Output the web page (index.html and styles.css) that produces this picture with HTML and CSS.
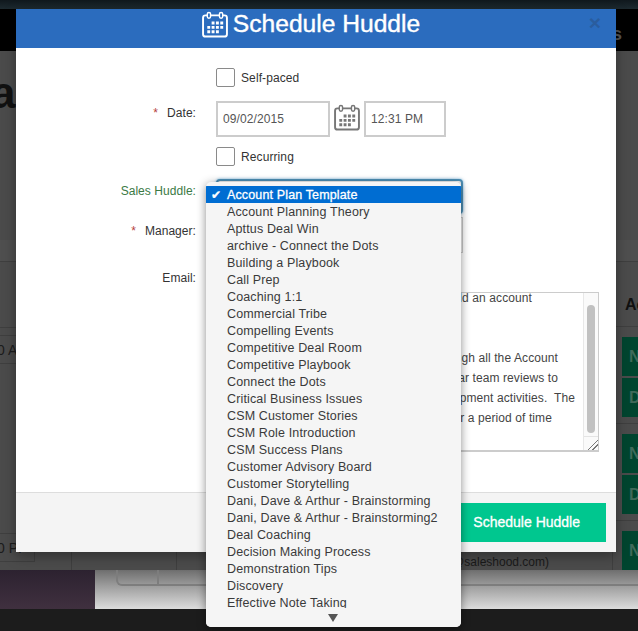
FILE: index.html
```html
<!DOCTYPE html>
<html lang="en">
<head>
  <meta charset="UTF-8">
  <meta name="viewport" content="width=device-width, initial-scale=1.0">
  <title>Schedule Huddle</title>
  <link rel="stylesheet" href="styles.css">
</head>
<body>
  <svg class="defs" width="0" height="0" aria-hidden="true">
    <symbol id="calendar" viewBox="0 0 27 27">
      <rect x="1.1" y="4" width="24.8" height="22" rx="2.5" fill="none" stroke="currentColor" stroke-width="2"/>
      <rect x="5.5" y="1" width="3.4" height="6" rx="1.7" fill="var(--ring)" stroke="currentColor" stroke-width="1.5"/>
      <rect x="18.1" y="1" width="3.4" height="6" rx="1.7" fill="var(--ring)" stroke="currentColor" stroke-width="1.5"/>
      <path fill="currentColor" d="M10 10.5h3v3h-3zM14.5 10.5h3v3h-3zM19 10.5h3v3h-3zM5.5 15h3v3h-3zM10 15h3v3h-3zM14.5 15h3v3h-3zM19 15h3v3h-3zM5.5 19.5h3v3h-3zM10 19.5h3v3h-3zM14.5 19.5h3v3h-3z"/>
    </symbol>
  </svg>

  <!-- dimmed page behind the dialog -->
  <div class="page">
    <div class="top-strip"></div>
    <div class="nav-bar"><span class="nav-end">s</span></div>
    <div class="content">
      <div class="col-left">
        <div class="page-title">a</div>
        <div class="band"></div>
        <div class="hairline"></div>
        <div class="time-row">0 AI</div>
        <div class="time-row last">0 PI</div>
      </div>
      <div class="col-mid"></div>
      <div class="col-wide"><span class="owner">(dani@saleshood.com)</span></div>
      <div class="col-right">
        <div class="band"></div>
        <div class="side-title">Ac</div>
        <div class="tile">N</div>
        <div class="tile">D</div>
        <div class="hairline"></div>
        <div class="tile">N</div>
        <div class="tile">D</div>
        <div class="hairline"></div>
        <div class="tile">N</div>
      </div>
    </div>
    <div class="foot-strip">
      <div class="foot-art"></div>
      <div class="foot-tools"><div class="tool-box"><span class="tool-cell"></span></div></div>
    </div>
    <div class="bottom-bar"></div>
  </div>

  <div class="modal">
    <div class="modal-header">
      <svg class="header-cal"><use href="#calendar"/></svg>
      <h1>Schedule Huddle</h1>
      <span class="close">×</span>
    </div>

    <div class="modal-body">
      <div class="row check-row">
        <span class="field-label"></span>
        <span class="checkbox"></span><span class="check-text">Self-paced</span>
      </div>
      <div class="row date-row">
        <span class="field-label"><i class="req">*</i>Date:</span>
        <span class="input date-input">09/02/2015</span>
        <svg class="input-cal"><use href="#calendar"/></svg>
        <span class="input time-input">12:31 PM</span>
      </div>
      <div class="row check-row recurring">
        <span class="field-label"></span>
        <span class="checkbox"></span><span class="check-text">Recurring</span>
      </div>
      <div class="row select-row">
        <span class="field-label huddle">Sales Huddle:</span>
        <span class="select focused"></span>
      </div>
      <div class="row select-row manager">
        <span class="field-label"><i class="req">*</i>Manager:</span>
        <span class="select"></span>
      </div>
      <div class="row email-row">
        <span class="field-label">Email:</span>
      </div>
      <div class="note">
        <div class="note-text">
          <p>build an account</p>
          <p>&nbsp;</p>
          <p>&nbsp;</p>
          <p>through all the Account</p>
          <p>regular team reviews to</p>
          <p>development activities.&nbsp; The</p>
          <p>for a period of time</p>
        </div>
        <div class="note-scroll">
          <div class="thumb"></div>
          <div class="grip"></div>
        </div>
      </div>

      <ul class="dropdown">
        <li class="selected">Account Plan Template</li>
        <li>Account Planning Theory</li>
        <li>Apttus Deal Win</li>
        <li>archive - Connect the Dots</li>
        <li>Building a Playbook</li>
        <li>Call Prep</li>
        <li>Coaching 1:1</li>
        <li>Commercial Tribe</li>
        <li>Compelling Events</li>
        <li>Competitive Deal Room</li>
        <li>Competitive Playbook</li>
        <li>Connect the Dots</li>
        <li>Critical Business Issues</li>
        <li>CSM Customer Stories</li>
        <li>CSM Role Introduction</li>
        <li>CSM Success Plans</li>
        <li>Customer Advisory Board</li>
        <li>Customer Storytelling</li>
        <li>Dani, Dave &amp; Arthur - Brainstorming</li>
        <li>Dani, Dave &amp; Arthur - Brainstorming2</li>
        <li>Deal Coaching</li>
        <li>Decision Making Process</li>
        <li>Demonstration Tips</li>
        <li>Discovery</li>
        <li class="cut">Effective Note Taking</li>
        <li class="more"><span class="more-arrow"></span></li>
      </ul>
    </div>

    <div class="modal-footer">
      <span class="save-button">Schedule Huddle</span>
    </div>
  </div>
</body>
</html>
```

FILE: styles.css
```css
* {
  box-sizing: border-box;
}
html, body {
  margin: 0;
  height: 631px;
  overflow: hidden;
}
body {
  position: relative;
  font-family: "Liberation Sans", Arial, sans-serif;
  font-size: 12px;
  color: #333;
  background: #1c1c1c;
}
.defs {
  position: absolute;
}

/* page behind */
.page {
  display: flex;
  flex-direction: column;
  height: 631px;
}
.top-strip {
  height: 9px;
  background: linear-gradient(#10181d, #1d2a30);
}
.nav-bar {
  height: 42px;
  background: #000;
  display: flex;
  justify-content: flex-end;
  padding: 14px 16px 0 0;
}
.nav-end {
  font-size: 19px;
  font-weight: bold;
  line-height: 22px;
  color: #555;
}
.content {
  height: 519px;
  display: flex;
  background: #4b4b4b;
  color: #1c1c1c;
}
.col-left {
  width: 72px;
  border-right: 1px solid #3f3f3f;
  overflow: hidden;
}
.page-title {
  width: 16px;
  height: 159px;
  overflow: hidden;
  font-size: 44px;
  font-weight: bold;
  line-height: 50px;
  padding-top: 17px;
  text-indent: -9px;
  color: #111;
}
.band {
  height: 22px;
  margin-top: 30px;
  border-bottom: 1px solid #3f3f3f;
  background: #4f4f4f;
}
.hairline {
  height: 1px;
  background: #3f3f3f;
}
.col-left .hairline {
  margin-top: 65px;
}
.time-row {
  height: 29px;
  margin-top: 7px;
  border-top: 1px solid #3f3f3f;
  border-bottom: 1px solid #3f3f3f;
  line-height: 29px;
  text-indent: -3px;
  font-size: 14px;
}
.time-row.last {
  width: 35px;
  margin-top: 169px;
  border-right: 1px solid #3f3f3f;
}
.col-mid {
  width: 105px;
  border-right: 1px solid #3f3f3f;
}
.col-wide {
  width: 436px;
  border-right: 1px solid #3f3f3f;
  display: flex;
  align-items: flex-end;
  justify-content: flex-end;
  padding: 0 63px 0 0;
}
.owner {
  line-height: 15px;
  font-size: 12px;
  color: #1a1a1a;
}
.col-right {
  flex: 1;
  padding-left: 9px;
  overflow: hidden;
}
.col-right .band {
  margin-left: -9px;
  margin-top: 189px;
}
.col-right .hairline {
  margin: 6px -9px 10px;
}
.side-title {
  height: 65px;
  padding-top: 33px;
  font-size: 16px;
  font-weight: bold;
  line-height: 20px;
  color: #111;
  border-bottom: 1px solid #3f3f3f;
  margin-left: -9px;
  padding-left: 12px;
  white-space: nowrap;
}
.tile {
  height: 39px;
  width: 30px;
  margin-bottom: 2px;
  background: #00452f;
  color: #3f6a5a;
  font-size: 16px;
  font-weight: bold;
  line-height: 39px;
  padding-left: 7px;
}
.side-title + .tile {
  margin-top: 10px;
}
.foot-strip {
  height: 39px;
  display: flex;
}
.foot-art {
  width: 95px;
  background: linear-gradient(#2c2230, #40303f);
}
.foot-tools {
  flex: 1;
  padding-left: 21px;
  overflow: hidden;
  background: linear-gradient(#6e6e6e, #9c9c9c 40%, #dcdcdc);
}
.tool-box {
  width: 600px;
  height: 16px;
  border: 2px solid #7d7d7d;
  border-top: 0;
  border-radius: 0 0 6px 6px;
}
.tool-cell {
  display: block;
  width: 41px;
  height: 100%;
  border-right: 2px solid #7d7d7d;
}
.bottom-bar {
  flex: 1;
  background: #1c1c1c;
}

/* dialog */
.modal {
  position: absolute;
  left: 16px;
  top: 9px;
  width: 600px;
  height: 543px;
  background: #fff;
  box-shadow: 0 4px 12px rgba(0,0,0,0.35);
  display: flex;
  flex-direction: column;
}
.modal-header {
  position: relative;
  height: 39px;
  flex: none;
  background: #2b6cbe;
  color: #fff;
  display: flex;
  justify-content: center;
  align-items: flex-start;
  padding-right: 10px;
  --ring: #2b6cbe;
}
.modal-header h1 {
  margin: 0;
  font-size: 24.6px;
  font-weight: normal;
  line-height: 29px;
  -webkit-text-stroke: 0.4px #fff;
}
.header-cal {
  width: 26px;
  height: 27px;
  margin: 2px 5px 0 0;
}
.close {
  position: absolute;
  right: 15px;
  top: 2px;
  font-size: 21px;
  font-weight: bold;
  line-height: 24px;
  color: #2a5d9e;
}
.modal-body {
  position: relative;
  flex: 1;
  padding-top: 20px;
}
.row {
  display: flex;
  align-items: flex-start;
}
.field-label {
  flex: none;
  width: 180px;
  margin-right: 20px;
  text-align: right;
  line-height: 16px;
  letter-spacing: 0.05px;
}
.req {
  font-style: normal;
  color: #b5413d;
  margin-right: 9px;
}
.check-row {
  height: 19px;
  align-items: center;
}
.recurring {
  margin-top: 10px;
}
.checkbox {
  width: 19px;
  height: 19px;
  border: 1px solid #8a8a8a;
  border-radius: 2px;
  background: #fff;
}
.check-text {
  margin-left: 6px;
  letter-spacing: 0.1px;
}
.date-row {
  margin-top: 14px;
  height: 36px;
  --ring: #fff;
}
.date-row .field-label {
  padding-top: 4px;
}
.input {
  height: 36px;
  border: 2px solid #ccc;
  padding-left: 5px;
  line-height: 33px;
  color: #555;
  letter-spacing: 0.1px;
}
.date-input {
  width: 114px;
}
.time-input {
  width: 82px;
}
.input-cal {
  width: 26px;
  height: 27px;
  margin: 3px 4px 0 4px;
  color: #777;
}
.select-row {
  margin-top: 17px;
  height: 36px;
}
.huddle {
  color: #3b7a45;
  padding-top: 0;
}
.select {
  width: 247px;
  height: 35px;
  margin-top: -4px;
  border: 1px solid #ccc;
  background: #f4f4f4;
}
.select.focused {
  border: 2px solid #4d8fb5;
  border-radius: 4px;
  box-shadow: 0 0 3px #6fb1dd;
}
.manager {
  margin-top: 4px;
}
.manager .select {
  height: 36px;
  margin-top: -6px;
}
.email-row {
  margin-top: 11px;
  height: 22px;
}
.note {
  margin: 0 17px 0 200px;
  height: 160px;
  border: 2px solid #ccc;
  border-top-width: 1px;
  border-right-width: 1px;
  display: flex;
  overflow: hidden;
}
.note-text {
  flex: 1;
  padding-right: 8px;
  margin-top: -5px;
  line-height: 20px;
  color: #444;
  letter-spacing: 0.1px;
}
.note-text p {
  margin: 0;
  text-align: right;
  white-space: nowrap;
}
.note-text p:nth-child(1) {
  padding-right: 43px;
}
.note-text p:nth-child(4), .note-text p:nth-child(5) {
  padding-right: 17px;
}
.note-text p:nth-child(7) {
  padding-right: 23px;
}
.note-scroll {
  flex: none;
  width: 15px;
  background: #fafafa;
  border-left: 1px solid #e8e8e8;
  padding: 12px 3px 0 3px;
  display: flex;
  flex-direction: column;
  justify-content: space-between;
  position: relative;
}
.thumb {
  width: 8px;
  height: 128px;
  background: #c1c1c1;
  border-radius: 4px;
}
.grip {
  position: absolute;
  left: 0;
  right: 0;
  bottom: 0;
  height: 14px;
  border-top: 1px solid #e4e4e4;
  background: linear-gradient(135deg, #fafafa 60%, #777 60%, #777 66%, #fafafa 66%, #fafafa 76%, #777 76%, #777 82%, #fafafa 82%);
}

/* open select list */
.dropdown {
  position: absolute;
  left: 190px;
  top: 134px;
  width: 255px;
  height: 445px;
  margin: 0;
  padding: 4px 0 0;
  list-style: none;
  background: #f5f5f5;
  border-radius: 5px;
  box-shadow: 0 2px 10px rgba(0,0,0,0.45);
  overflow: hidden;
  font-size: 12.5px;
  letter-spacing: 0.14px;
}
.dropdown li {
  position: relative;
  height: 17px;
  line-height: 19px;
  padding-left: 21px;
  color: #3a3a3a;
  white-space: nowrap;
}
.dropdown li.selected {
  background: #006dd2;
  color: #fff;
  -webkit-text-stroke: 0.3px #fff;
}
.dropdown li.selected::before {
  content: "✔";
  position: absolute;
  left: 5px;
  font-family: "DejaVu Sans", sans-serif;
  font-size: 12px;
}
.dropdown li.cut {
  height: 14px;
  overflow: hidden;
}
.dropdown li.more {
  height: 20px;
  background: #f5f5f5;
  padding: 6px 0 0 122px;
}
.more-arrow {
  display: block;
  width: 0;
  height: 0;
  border-left: 5px solid transparent;
  border-right: 5px solid transparent;
  border-top: 8px solid #555;
}

.modal-footer {
  height: 60px;
  flex: none;
  background: #f4f4f4;
  border-top: 1px solid #ddd;
  display: flex;
  justify-content: flex-end;
  padding: 10px 10px 0 0;
}
.save-button {
  width: 166px;
  height: 39px;
  background: #00c78f;
  color: #fff;
  font-size: 14px;
  -webkit-text-stroke: 0.3px #fff;
  line-height: 38px;
  text-align: right;
  padding-right: 26px;
}
```
